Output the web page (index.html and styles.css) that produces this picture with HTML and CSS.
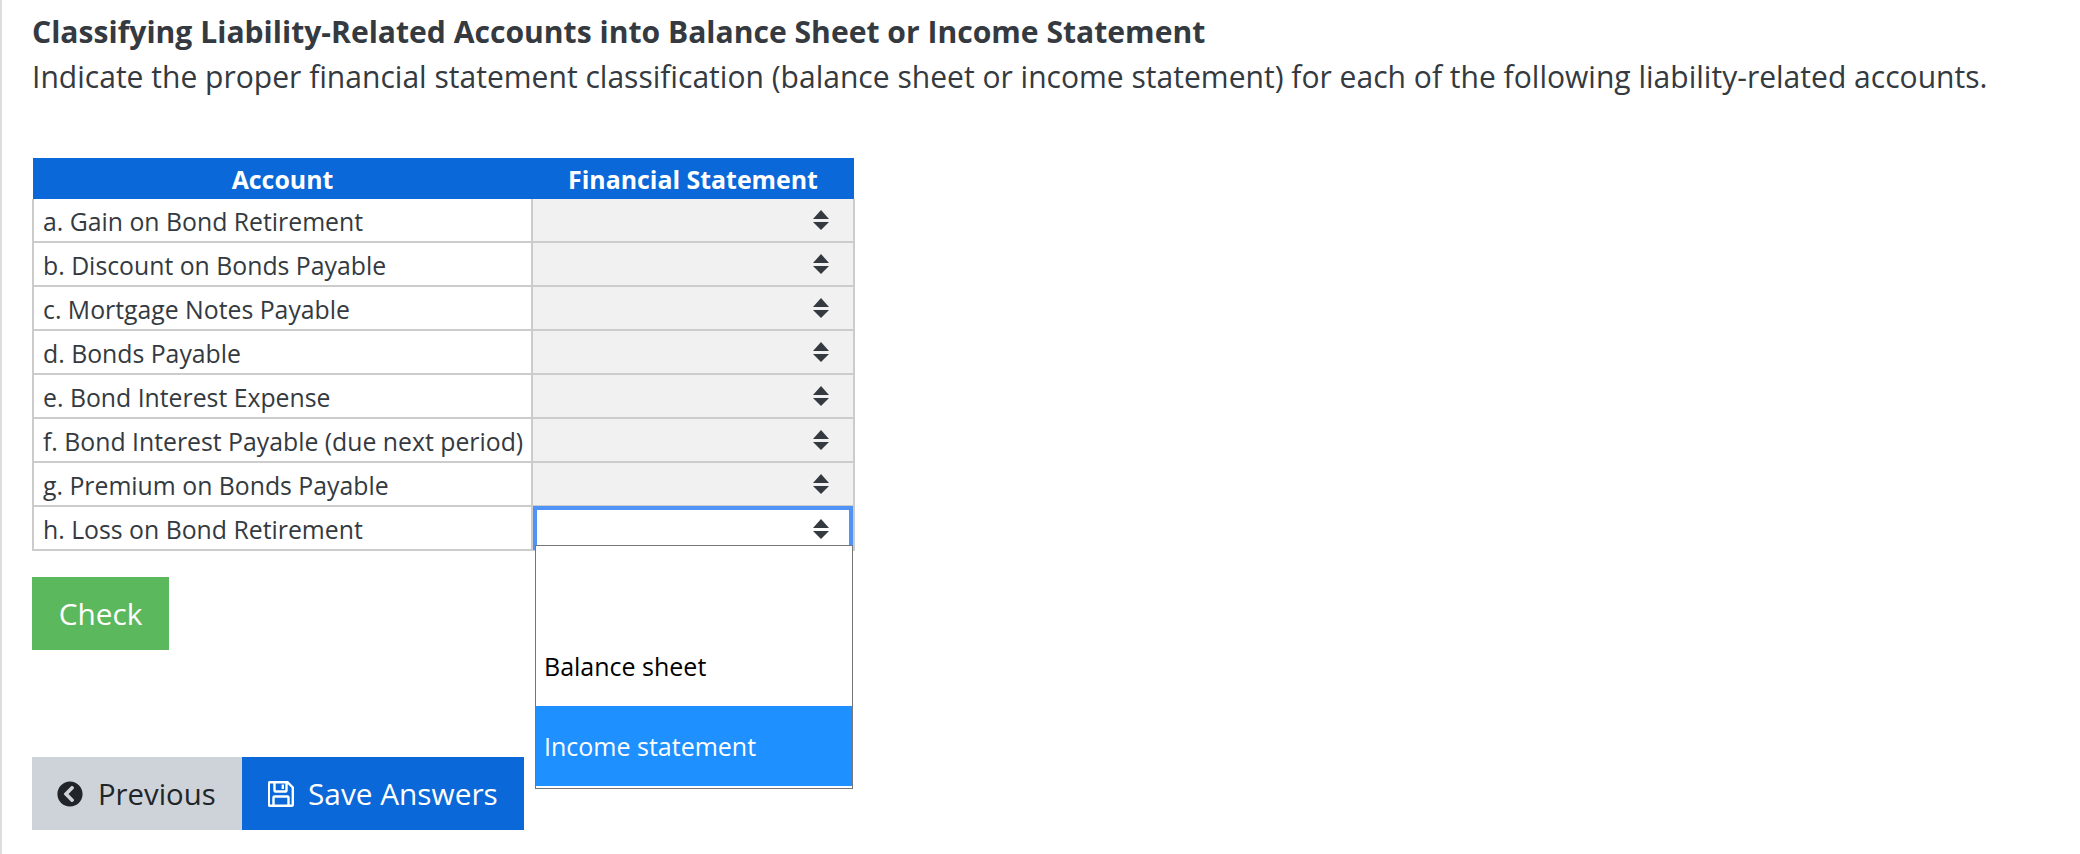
FILE: index.html
```html
<!DOCTYPE html>
<html lang="en">
<head>
  <meta charset="UTF-8" />
  <title>Classifying Liability-Related Accounts</title>
  <link rel="stylesheet" href="styles.css">
</head>
<body>
  <h1>Classifying Liability-Related Accounts into Balance Sheet or Income Statement</h1>
  <p class="intro">Indicate the proper financial statement classification (balance sheet or income statement) for each of the following liability-related accounts.</p>

  <table class="quiz">
    <thead>
      <tr><th class="col-account">Account</th><th class="col-statement">Financial Statement</th></tr>
    </thead>
    <tbody>
      <tr><td>a. Gain on Bond Retirement</td><td class="pick"><div class="select"><svg class="updown" viewBox="0 0 16 20"><path d="M8 0l8 9H0zM0 12h16l-8 8z"/></svg></div></td></tr>
      <tr><td>b. Discount on Bonds Payable</td><td class="pick"><div class="select"><svg class="updown" viewBox="0 0 16 20"><path d="M8 0l8 9H0zM0 12h16l-8 8z"/></svg></div></td></tr>
      <tr><td>c. Mortgage Notes Payable</td><td class="pick"><div class="select"><svg class="updown" viewBox="0 0 16 20"><path d="M8 0l8 9H0zM0 12h16l-8 8z"/></svg></div></td></tr>
      <tr><td>d. Bonds Payable</td><td class="pick"><div class="select"><svg class="updown" viewBox="0 0 16 20"><path d="M8 0l8 9H0zM0 12h16l-8 8z"/></svg></div></td></tr>
      <tr><td>e. Bond Interest Expense</td><td class="pick"><div class="select"><svg class="updown" viewBox="0 0 16 20"><path d="M8 0l8 9H0zM0 12h16l-8 8z"/></svg></div></td></tr>
      <tr><td>f. Bond Interest Payable (due next period)</td><td class="pick"><div class="select"><svg class="updown" viewBox="0 0 16 20"><path d="M8 0l8 9H0zM0 12h16l-8 8z"/></svg></div></td></tr>
      <tr><td>g. Premium on Bonds Payable</td><td class="pick"><div class="select"><svg class="updown" viewBox="0 0 16 20"><path d="M8 0l8 9H0zM0 12h16l-8 8z"/></svg></div></td></tr>
      <tr>
        <td>h. Loss on Bond Retirement</td>
        <td class="pick open">
          <div class="select"><svg class="updown" viewBox="0 0 16 20"><path d="M8 0l8 9H0zM0 12h16l-8 8z"/></svg></div>
          <ul class="options">
            <li></li>
            <li>Balance sheet</li>
            <li class="active">Income statement</li>
          </ul>
        </td>
      </tr>
    </tbody>
  </table>

  <button class="btn btn-check">Check</button>

  <div class="nav-buttons">
    <button class="btn btn-prev">
      <svg class="icon" viewBox="0 0 512 512"><path d="M256 504C119 504 8 393 8 256S119 8 256 8s248 111 248 248-111 248-248 248zM142.100 273l135.500 135.500c9.400 9.400 24.600 9.400 33.900 0l17-17c9.400-9.400 9.400-24.600 0-33.900L226.900 256l101.600-101.600c9.400-9.400 9.400-24.600 0-33.900l-17-17c-9.400-9.400-24.600-9.400-33.900 0L142.100 239c-9.400 9.400-9.400 24.600 0 34z"/></svg>
      Previous
    </button>
    <button class="btn btn-save">
      <svg class="icon" viewBox="0 0 26 26"><path class="outline" d="M2 1.200h17.500l5.300 5.300v17a1.300 1.300 0 0 1-1.300 1.300h-21.500a1.300 1.300 0 0 1-1.200-1.300v-21a1.300 1.300 0 0 1 1.200-1.300zM6.500 1.200v8.300a1 1 0 0 0 1 1h10a1 1 0 0 0 1-1V1.200M5.500 24.800v-8.300a1 1 0 0 1 1-1h13a1 1 0 0 1 1 1v8.300M14.800 3.500v4.500"/></svg>
      Save Answers
    </button>
  </div>
</body>
</html>
```

FILE: styles.css
```css
body {
  margin: 0;
  min-height: 854px;
  box-sizing: border-box;
  padding: 14px 0 0 30px;
  border-left: 2px solid #ddd;
  background-color: #fff;
  color: #343a40;
  font-family: "Open Sans", sans-serif;
  font-size: 24.8px;
}

h1 {
  margin: 0;
  font-size: 30.1px;
  line-height: 36px;
  font-weight: 700;
}

.intro {
  margin: 9px 0 0;
  font-size: 30.06px;
  line-height: 36px;
}

.quiz {
  margin-top: 63px;
  width: 823px;
  table-layout: fixed;
  border-collapse: collapse;
}

.quiz th {
  height: 41px;
  padding: 0;
  background-color: #0a68d8;
  color: #fff;
  font-size: 24.9px;
  font-weight: 700;
  text-align: center;
}

.col-account {
  width: 499px;
}

.quiz td {
  height: 44px;
  box-sizing: border-box;
  padding: 2px 0 0 9px;
  border: 2px solid #ccc;
  white-space: nowrap;
}

.quiz tr:first-child td {
  height: 43px;
  border-top: 0;
}

.quiz td.pick {
  position: relative;
  padding: 0;
  background-color: #f1f1f1;
}

.select {
  display: flex;
  align-items: center;
  justify-content: flex-end;
  height: 100%;
  padding-right: 24px;
}

.updown {
  width: 16px;
  height: 20px;
  fill: #343a40;
}

.pick.open {
  background-color: #fff;
}

.pick.open .select {
  position: absolute;
  top: -1px;
  left: 0;
  right: 0;
  bottom: -1px;
  height: auto;
  background-color: #fff;
  border: 4px solid #4f93f6;
  border-bottom: 0;
  padding-right: 20px;
  padding-bottom: 3px;
}

/* open dropdown list sits over the buttons */
.options {
  position: absolute;
  top: 38px;
  left: 2px;
  width: 318px;
  box-sizing: border-box;
  margin: 0;
  padding: 0 0 2px;
  list-style: none;
  background-color: #fff;
  border: 1px solid #767676;
  color: #000;
  font-size: 25px;
  z-index: 2;
}

.options li {
  display: flex;
  align-items: center;
  height: 80px;
  padding-left: 8px;
}

.options li.active {
  background-color: #1e90ff;
  color: #fff;
}

.btn {
  display: flex;
  align-items: center;
  height: 73px;
  border: none;
  padding: 0;
  font-family: "Open Sans", sans-serif;
  font-size: 29.8px;
}

.btn-check {
  margin-top: 26px;
  width: 137px;
  justify-content: center;
  background-color: #5cb85c;
  color: #fff;
}

.nav-buttons {
  display: flex;
  margin-top: 107px;
}

.icon {
  width: 26px;
  height: 26px;
  margin-right: 14px;
}

.btn-prev {
  width: 210px;
  padding-left: 25px;
  background-color: #ced3da;
  color: #212529;
  font-size: 29.3px;
}

.btn-prev .icon {
  margin-right: 15px;
  fill: #212529;
}

.btn-save {
  width: 282px;
  padding-left: 26px;
  background-color: #0a68d8;
  color: #fff;
}

.btn-save .outline {
  fill: none;
  stroke: #fff;
  stroke-width: 2.4;
}
```
